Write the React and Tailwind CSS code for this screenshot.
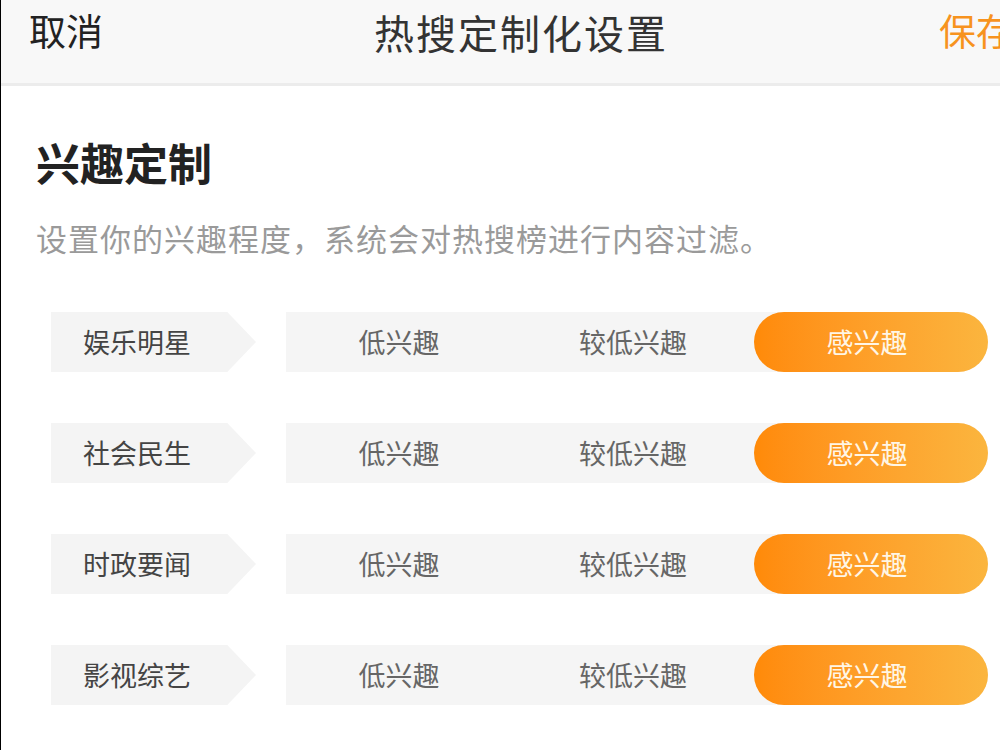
import React from "react";

const font = { fontFamily: '"Noto Sans CJK SC", "Noto Sans", sans-serif' };

const rows = ["娱乐明星", "社会民生", "时政要闻", "影视综艺"];

function Row({ label }) {
  return (
    <div className="flex items-center h-[60px]">
      <div className="w-[205px] h-[60px] bg-[#f4f4f4] flex items-center pl-[32px] text-[27px] text-[#444] [clip-path:polygon(0_0,86%_0,100%_50%,86%_100%,0_100%)]">
        {label}
      </div>
      <div className="ml-[30px] flex-1 h-[60px] bg-[#f5f5f5] rounded-l-[24px] rounded-r-full grid grid-cols-3 items-center text-[27px] text-[#666]">
        <div className="flex items-center justify-center pr-[8px]">低兴趣</div>
        <div className="flex items-center justify-center pr-[8px]">较低兴趣</div>
        <div className="h-[60px] rounded-full bg-gradient-to-r from-[#ff8a08] to-[#fbb53e] flex items-center justify-center pr-[8px] text-[#fff6e6]">
          感兴趣
        </div>
      </div>
    </div>
  );
}

export default function App() {
  return (
    <div className="w-[1000px] h-[750px] overflow-hidden bg-white border-l border-black" style={font}>
      <div className="w-[1040px]">
        <div className="h-[86px] bg-[#f8f8f8] relative flex items-start justify-between px-[28px] pt-[6px] border-b-[3px] border-[#ececec]">
          <span className="text-[37px] text-[#222] leading-[48px]">取消</span>
          <span className="absolute left-0 right-0 top-[8px] text-center text-[40px] tracking-[2px] text-[#333] leading-[48px]">
            热搜定制化设置
          </span>
          <span className="text-[37px] text-[#f7931e] leading-[48px]">保存</span>
        </div>
        <div className="px-[35px] pt-[48px]">
          <div className="text-[44px] font-bold text-[#222] leading-[56px]">兴趣定制</div>
          <div className="mt-[28px] text-[31px] text-[#9a9a9a] leading-[40px] tracking-[1px]">
            设置你的兴趣程度，系统会对热搜榜进行内容过滤。
          </div>
        </div>
        <div className="pl-[50px] pr-[53px] mt-[54px] flex flex-col gap-[51px]">
          {rows.map((r) => (
            <Row key={r} label={r} />
          ))}
        </div>
      </div>
    </div>
  );
}
